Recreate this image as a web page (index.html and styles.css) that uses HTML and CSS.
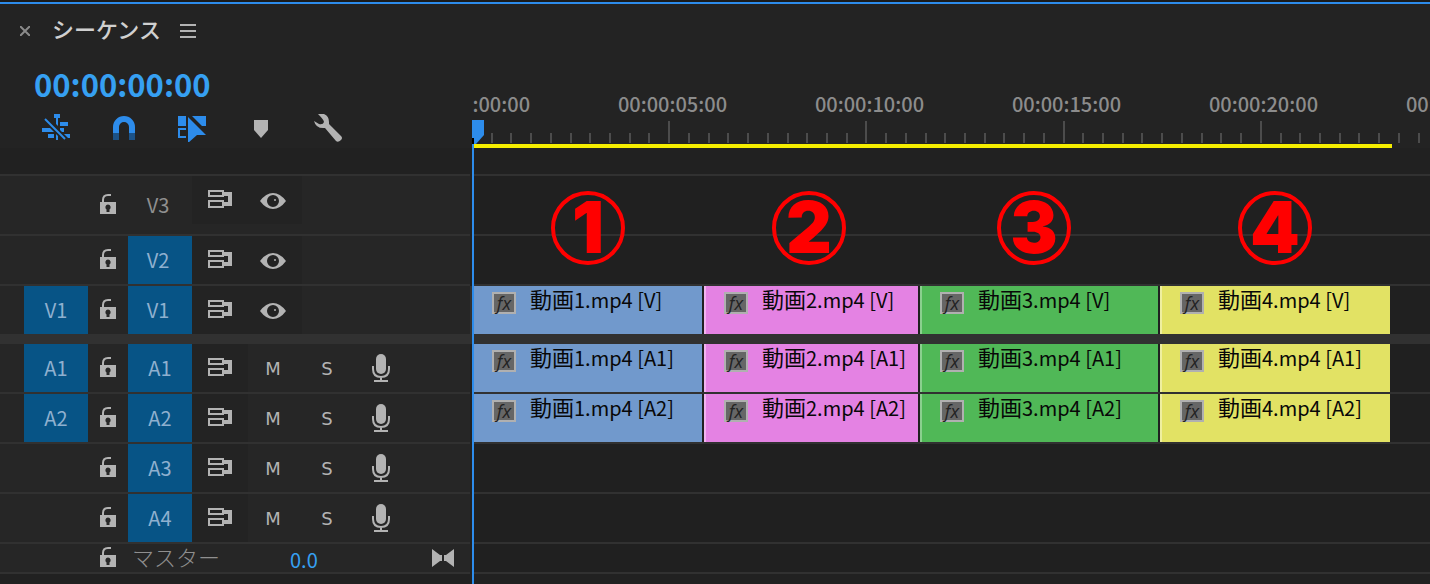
FILE: index.html
```html
<!DOCTYPE html>
<html lang="ja">
<head>
    <meta charset="UTF-8">
    <meta name="viewport" content="width=device-width, initial-scale=1.0">
    <title>シーケンス</title>
    <link rel="stylesheet" href="styles.css">
</head>
<body>
    <!-- Shared icons -->
    <svg class="sprite" aria-hidden="true">
        <symbol id="lock" viewBox="0 0 16 20">
            <path d="M3 9V6Q3 1 8 1h3" fill="none" stroke="currentColor" stroke-width="2"/>
            <path fill-rule="evenodd" d="M0 8h16v12H0zM8 10.500a2.700 2.700 0 0 0-1.500 4.900V18h3v-2.600A2.700 2.700 0 0 0 8 10.500z"/>
        </symbol>
        <symbol id="sync" viewBox="0 0 24 18">
            <path d="M1 1h14v5H1zM1 11h14v6H1z" fill="none" stroke="currentColor" stroke-width="2"/>
            <path d="M15 2h9v14h-9v-4h5V6h-5z"/>
        </symbol>
        <symbol id="eye" viewBox="0 0 26 16">
            <path fill-rule="evenodd" d="M0 8Q6 0 13 0t13 8q-6 8-13 8T0 8zM13 2a6 6 0 1 0 0 12 6 6 0 0 0 0-12z"/>
            <circle cx="15" cy="7" r="1"/>
        </symbol>
        <symbol id="mic" viewBox="0 0 18 28">
            <rect x="4" width="10" height="20" rx="5"/>
            <path d="M1 12v3q0 8 8 8t8-8v-3M9 23v4M2 27h14" fill="none" stroke="currentColor" stroke-width="2"/>
        </symbol>
    </svg>

    <div class="panel">
        <header class="panel-top">
            <div class="panel-left">
                <div class="tab-bar">
                    <button class="close" aria-label="閉じる"><svg width="10" height="10"><path d="M0 0l10 10M10 0L0 10"/></svg></button>
                    <h1>シーケンス</h1>
                    <button class="menu" aria-label="メニュー"><svg width="16" height="14"><path d="M0 0h16v2H0zM0 6h16v2H0zM0 12h16v2H0z"/></svg></button>
                </div>
                <div class="timecode">00:00:00:00</div>
                <div class="toolbar">
                    <button class="on" aria-label="ネスト"><svg width="28" height="28"><path d="M12 0h6v4h-2v8l-2-2V4h-2zM18 8h8v4h-8zM0 14h8l4 4H0zM18 14h4v4h-2l-2-2zM6 20h6v4H6zM14 20l2 2v4h-2zM22 20h6v4h-2l-4-4z"/><path d="M3 5l20 20" fill="none" stroke="currentColor" stroke-width="2"/></svg></button>
                    <button class="on" aria-label="スナップ"><svg width="28" height="28"><path d="M3 19v-6a11 11 0 0 1 22 0v6h-6v-6a5 5 0 0 0-10 0v6z"/><path class="dim" d="M3 19h6v7H3zM19 19h6v7h-6z"/></svg></button>
                    <button class="on" aria-label="リンクされた選択"><svg width="28" height="28"><path d="M0 2h8v10H0zM14 2h14v10h-4zM10 3l18 18h-9l-9 8z"/><path d="M8 15H1v8h7" fill="none" stroke="currentColor" stroke-width="2"/></svg></button>
                    <button aria-label="マーカー"><svg width="28" height="28"><path d="M8 6h14v10l-7 8-7-8z"/></svg></button>
                    <button aria-label="設定"><svg width="28" height="28"><path d="M4 0h6q5 2 5 8v2l12 12q2 2 0 4-3 3-5 1L11 14Q2 15 0 7l5 3q4 1 5-2 0-2-6-8z"/></svg></button>
                </div>
            </div>
            <div class="ruler">
                <div class="labels">
                    <span>00:00:00:00</span><span>00:00:05:00</span><span>00:00:10:00</span><span>00:00:15:00</span><span>00:00:20:00</span><span>00:00:25:00</span>
                </div>
                <svg class="ticks" height="22"></svg>
                <div class="work-area"></div>
            </div>
        </header>

        <main class="tracks"></main>

        <!-- Clip numbers drawn over the video lanes -->
        <span class="mark mark-1">1</span>
        <span class="mark mark-2">2</span>
        <span class="mark mark-3">3</span>
        <span class="mark mark-4">4</span>

        <div class="playhead"><svg width="12" height="24"><path d="M0 0h12v15l-8 9H0z"/><path class="shadow" d="M0 18h2v6H0z"/></svg></div>
    </div>

    <script src="timeline.js"></script>
</body>
</html>
```
FILE: timeline.js
```js
const tracks = [
    { name: 'V3', type: 'video', size: 'tall', off: true },
    { name: 'V2', type: 'video' },
    { name: 'V1', type: 'video', size: 'last-video', source: true, clips: 'V' },
    { name: 'A1', type: 'audio', source: true, clips: 'A1' },
    { name: 'A2', type: 'audio', source: true, clips: 'A2' },
    { name: 'A3', type: 'audio' },
    { name: 'A4', type: 'audio' }
];

function icon(name, width, height) {
    return `<svg width="${width}" height="${height}"><use href="#${name}"/></svg>`;
}

function renderClips(channel) {
    return [1, 2, 3, 4].map(n => `
        <div class="clip clip-${n}">
            <span class="fx">fx</span>
            <span class="clip-name"><span class="kanji">動画</span>${n}.mp4 [${channel}]</span>
        </div>`).join('');
}

function renderTrack(track) {
    const controls = track.type === 'video'
        ? `<button class="toggle" aria-label="表示">${icon('eye', 26, 16)}</button>`
        : `<button class="mute">M</button><button class="solo">S</button><button class="record" aria-label="録音">${icon('mic', 18, 28)}</button>`;

    return `
        <div class="track ${track.type} ${track.size || ''}">
            <div class="head">
                <button class="patch ${track.source ? 'active' : ''}">${track.source ? track.name : ''}</button>
                <button class="lock" aria-label="ロック">${icon('lock', 16, 20)}</button>
                <button class="patch target ${track.off ? '' : 'active'}">${track.name}</button>
                <button class="sync" aria-label="同期ロック">${icon('sync', 24, 18)}</button>
                ${controls}
            </div>
            <div class="lane">${track.clips ? renderClips(track.clips) : ''}</div>
        </div>`;
}

const master = `
    <div class="track master">
        <div class="head">
            <span class="patch"></span>
            <button class="lock" aria-label="ロック">${icon('lock', 16, 20)}</button>
            <span class="master-name">マスター</span>
            <span class="level">0.0</span>
            <button class="fit" aria-label="幅を合わせる"><svg width="22" height="18"><path d="M0 0l8 6h2v6H8l-8 6zM22 0l-8 6h-2v6h2l8 6z"/></svg></button>
        </div>
        <div class="lane"></div>
    </div>`;

document.querySelector('.tracks').innerHTML = tracks.map(renderTrack).join('') + master;

// Ten ticks for every five seconds
const TICK = 19.72;
let d = '';
for (let i = 1; i < 120; i++) {
    const x = Math.round(i * TICK) - 1;
    d += i % 10 === 0 ? `M${x} 0h2v22h-2z` : `M${x} 12h2v10h-2z`;
}
document.querySelector('.ticks').innerHTML = `<path d="${d}"/>`;
```
FILE: styles.css
```css
* {
    box-sizing: border-box;
}

body {
    margin: 0;
    background-color: #212121;
    color: #b3b3b3;
    font-family: "Noto Sans CJK JP", sans-serif;
    font-size: 20px;
    overflow: hidden;
}

button {
    display: flex;
    align-items: center;
    justify-content: center;
    padding: 0;
    border: none;
    background: none;
    color: inherit;
    font: inherit;
}

svg {
    display: block;
    fill: currentColor;
}

.sprite {
    position: absolute;
    width: 0;
    height: 0;
}

.panel {
    position: relative;
    min-height: 100vh;
    border-top: 2px solid #1b1b1b;
}

/* Header */
.panel-top {
    display: flex;
    gap: 2px;
    height: 146px;
    border-top: 2px solid #2d8ceb;
    background-color: #232323;
}

.panel-left {
    flex: none;
    width: 470px;
}

.tab-bar {
    display: flex;
    align-items: center;
    height: 54px;
    padding-left: 20px;
}

.close path {
    fill: none;
    stroke: #8a8a8a;
    stroke-width: 2;
}

h1 {
    margin: 0 19px 0 22px;
    padding-bottom: 6px;
    color: #d0d0d0;
    font-size: 22px;
    font-weight: 500;
    line-height: 32px;
}

.timecode {
    padding-left: 34px;
    color: #36a0f2;
    font-size: 31px;
    font-weight: 700;
    line-height: 52px;
}

.toolbar {
    display: flex;
    gap: 40px;
    padding-left: 42px;
    margin-top: 4px;
}

.toolbar .on {
    color: #2d8ceb;
}

.toolbar .dim {
    fill: #1c5287;
}

.ruler {
    flex: 1;
    min-width: 0;
    overflow: hidden;
    padding-top: 84px;
}

.labels {
    display: flex;
    margin-left: -95px;
    height: 33px;
    color: #8c8c8c;
    font-weight: 500;
    line-height: 32px;
}

.labels span {
    flex: none;
    width: 197px;
    text-align: center;
}

.ticks {
    width: 100%;
    fill: #4c4c4c;
    margin-bottom: 1px;
}

.work-area {
    width: 920px;
    height: 4px;
    background-color: #f5ee00;
}

/* Tracks */
.tracks {
    padding-top: 26px;
}

.track {
    display: flex;
    gap: 2px;
    height: 50px;
}

.track.tall {
    height: 62px;
}

.track.last-video {
    height: 58px;
    background-color: #313131;
}

.track.master {
    height: 30px;
}

.head,
.lane {
    display: flex;
    border-bottom: 2px solid #313131;
}

.head {
    flex: none;
    width: 470px;
    padding-left: 24px;
    background-color: #262626;
}

.lane {
    flex: 1;
    min-width: 0;
    gap: 2px;
    background-color: #202020;
}

.tall .head,
.tall .lane {
    border-top: 2px solid #313131;
}

.last-video .head,
.last-video .lane {
    border-bottom-width: 10px;
}

.patch {
    flex: none;
    width: 64px;
    color: #8f8f8f;
    line-height: 48px;
}

.patch.active {
    background-color: #075486;
    color: #8fb0cf;
}

.video .target {
    padding-right: 4px;
}

.lock {
    width: 40px;
    padding-bottom: 2px;
}

.sync {
    width: 56px;
    height: 48px;
    padding-bottom: 2px;
    background-color: #232323;
}

.toggle {
    width: 54px;
    height: 48px;
    padding-top: 2px;
    padding-right: 4px;
    background-color: #232323;
}

.mute,
.solo,
.record {
    width: 54px;
    padding-right: 4px;
}

.mute,
.solo {
    font-family: "DejaVu Sans", sans-serif;
    font-size: 18px;
}

.master-name {
    width: 162px;
    padding-left: 4px;
    color: #8f8f8f;
    font-size: 22px;
    font-weight: 300;
    line-height: 24px;
}

.level {
    flex: 1;
    color: #36a0f2;
    line-height: 32px;
}

.fit {
    padding-right: 16px;
}

/* Clips */
.clip {
    display: flex;
    flex: none;
    gap: 14px;
    padding-left: 18px;
    border-left: 2px solid;
    color: #080808;
}

.clip-1 {
    width: 230px;
    background-color: #7199cc;
    border-color: #7199cc;
}

.clip-2 {
    width: 214px;
    background-color: #e482e3;
    border-color: #f2b4f0;
}

.clip-3 {
    width: 238px;
    background-color: #50b857;
    border-color: #8bd08f;
}

.clip-4 {
    width: 230px;
    background-color: #e2e264;
    border-color: #efefa0;
}

.fx {
    flex: none;
    width: 24px;
    height: 22px;
    margin-top: 6px;
    border: 2px solid #b0b0b0;
    background-color: #666;
    color: #222;
    font-family: "Open Sans", sans-serif;
    font-size: 18px;
    font-style: italic;
    line-height: 18px;
    text-align: center;
}

.clip-name {
    line-height: 24px;
    white-space: nowrap;
}

.kanji {
    font-size: 22px;
}

/* Overlays */
.mark {
    position: absolute;
    top: 189px;
    width: 74px;
    height: 74px;
    border: 4px solid #f00;
    border-radius: 50%;
    color: #f00;
    font-family: Inter, sans-serif;
    font-size: 71px;
    font-weight: 900;
    line-height: 64px;
    text-align: center;
}

.mark-1 {
    left: 551px;
}

.mark-2 {
    left: 772px;
}

.mark-3 {
    left: 997px;
}

.mark-4 {
    left: 1238px;
}

.playhead {
    position: absolute;
    top: 118px;
    bottom: 0;
    left: 472px;
    width: 2px;
    background-color: #2d8ceb;
}

.playhead svg {
    fill: #2d8ceb;
}

.playhead .shadow {
    fill: #000;
}
```
